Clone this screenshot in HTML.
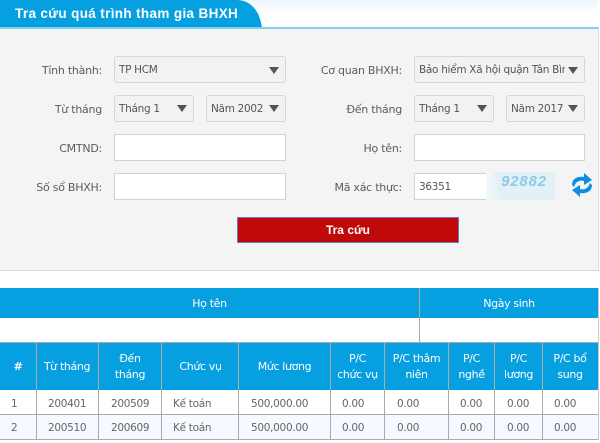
<!DOCTYPE html>
<html lang="vi"><head><meta charset="utf-8"><title>Tra cứu</title>
<style>
html,body{margin:0;padding:0;background:#fff}
#p{position:relative;width:600px;height:443px;overflow:hidden;background:#fff;font-family:"DejaVu Sans","Liberation Sans",sans-serif;color:#555}
#p div{position:absolute;box-sizing:border-box;white-space:nowrap}
.l{font-size:11px;text-align:right;width:110px;height:16px;line-height:18px;color:#5c5c5c;letter-spacing:-.25px}
.s{background:#f2f2f2;border:1.5px solid #d6d6d6;border-radius:3px;height:27px;font-size:10.5px;line-height:26px;padding-left:4px;color:#555;letter-spacing:-.3px;overflow:hidden}
.i{background:#fff;border:1px solid #d3d3d3;height:27px}
.a{width:0;height:0;border-left:5.5px solid transparent;border-right:5.5px solid transparent;border-top:7px solid #555}
.h{background:#069fe0;color:#fff;font-size:11px;line-height:16px;text-align:center;letter-spacing:-.35px;display:flex;align-items:center;justify-content:center;white-space:normal!important}
.c{font-size:10.5px;color:#666;line-height:26px;height:24px;letter-spacing:-.3px}
.v{width:1px;background:#aaa}
.o{height:1px;background:#aaa;left:0;width:598px}
</style></head><body><div id="p">
<div style="left:0;top:0;width:598px;height:28px;background:linear-gradient(#eaf6fc,#fff 12px)"></div>
<svg style="position:absolute;left:0;top:0" width="270" height="28"><path d="M0 0H238C252 1 260 12 262 28H0Z" fill="#069fe0"/></svg>
<div style="left:15px;top:5px;font-size:13.5px;line-height:18px;font-weight:bold;color:#fff;font-family:'Liberation Sans',sans-serif;letter-spacing:.35px">Tra cứu quá trình tham gia BHXH</div>
<div style="left:0;top:27px;width:599px;height:244px;background:#f4f4f4;border-top:2px solid #7fd2f0;border-bottom:1px solid #d8d8d8;border-right:1px solid #dcdcdc"></div>

<div class="l" style="left:-8px;top:62px">Tỉnh thành:</div>
<div class="s" style="left:114px;top:56px;width:172px">TP HCM</div><div class="a" style="left:269px;top:67px"></div>
<div class="l" style="left:-8px;top:101px">Từ tháng</div>
<div class="s" style="left:114px;top:95px;width:80px">Tháng 1</div><div class="a" style="left:177px;top:105px"></div>
<div class="s" style="left:206px;top:95px;width:80px">Năm 2002</div><div class="a" style="left:269px;top:105px"></div>
<div class="l" style="left:-8px;top:140px">CMTND:</div>
<div class="i" style="left:114px;top:134px;width:172px"></div>
<div class="l" style="left:-8px;top:179px">Số sổ BHXH:</div>
<div class="i" style="left:114px;top:173px;width:172px"></div>

<div class="l" style="left:292px;top:62px">Cơ quan BHXH:</div>
<div class="s" style="left:414px;top:56px;width:171px;padding-right:20px">Bảo hiểm Xã hội quận Tân Bình</div><div style="left:565px;top:58px;width:18px;height:23px;background:#f2f2f2"></div><div class="a" style="left:568px;top:67px"></div>
<div class="l" style="left:292px;top:101px">Đến tháng</div>
<div class="s" style="left:414px;top:95px;width:80px">Tháng 1</div><div class="a" style="left:477px;top:105px"></div>
<div class="s" style="left:506px;top:95px;width:79px">Năm 2017</div><div class="a" style="left:568px;top:105px"></div>
<div class="l" style="left:292px;top:140px">Họ tên:</div>
<div class="i" style="left:414px;top:134px;width:171px"></div>
<div class="l" style="left:292px;top:179px">Mã xác thực:</div>
<div class="i" style="left:414px;top:173px;width:141px;padding-left:4px;font-size:10.5px;letter-spacing:-.3px;line-height:27px;color:#555">36351</div>
<div style="left:486px;top:172px;width:69px;height:28px;background:linear-gradient(90deg,#f4f9fb,#e3f0f5 14px);color:#8ccbe4;font:italic bold 15px/20px 'Liberation Sans',sans-serif;text-align:center;letter-spacing:.8px;padding-left:7px">92882</div>
<svg style="position:absolute;left:572px;top:173px" width="20" height="24" viewBox="0 0 20 24"><path d="M0 12C0 6 5 3 12 4V0L20 7 12 12V8C8 7 4 8 2 14Z" fill="#0d8fe0"/><path d="M0 12C0 6 5 3 12 4V0L20 7 12 12V8C8 7 4 8 2 14Z" fill="#0d8fe0" transform="rotate(180 10 12)"/></svg>

<div style="left:237px;top:217px;width:222px;height:26px;background:#c00a0a;border:1px solid #5f7fc4;color:#fff;font:bold 12px/25px 'Liberation Sans',sans-serif;text-align:center">Tra cứu</div>

<div class="h" style="left:0;top:288px;width:419px;height:30px;padding-top:2px">Họ tên</div>
<div class="h" style="left:420px;top:288px;width:178px;height:30px;padding-top:2px">Ngày sinh</div>
<div class="v" style="left:419px;top:288px;height:55px"></div>
<div class="o" style="top:342px"></div>
<div style="left:598px;top:288px;width:1px;height:152px;background:#c8c8c8"></div>

<div class="h" style="left:0;top:343px;width:36px;height:47px;font-weight:bold">#</div>
<div class="h" style="left:36px;top:343px;width:62px;height:47px">Từ tháng</div>
<div class="h" style="left:98px;top:343px;width:64px;height:47px">Đến<br>tháng</div>
<div class="h" style="left:162px;top:343px;width:77px;height:47px">Chức vụ</div>
<div class="h" style="left:239px;top:343px;width:91px;height:47px">Mức lương</div>
<div class="h" style="left:330px;top:343px;width:55px;height:47px">P/C<br>chức vụ</div>
<div class="h" style="left:385px;top:343px;width:63px;height:47px">P/C thâm<br>niên</div>
<div class="h" style="left:448px;top:343px;width:47px;height:47px">P/C<br>nghề</div>
<div class="h" style="left:495px;top:343px;width:47px;height:47px">P/C<br>lương</div>
<div class="h" style="left:542px;top:343px;width:56px;height:47px">P/C bổ<br>sung</div>

<div style="left:0;top:415px;width:598px;height:24px;background:#f4faff"></div>
<div class="v" style="left:36px;top:343px;height:97px"></div>
<div class="v" style="left:98px;top:343px;height:97px"></div>
<div class="v" style="left:161px;top:343px;height:97px"></div>
<div class="v" style="left:238px;top:343px;height:97px"></div>
<div class="v" style="left:330px;top:343px;height:97px"></div>
<div class="v" style="left:384px;top:343px;height:97px"></div>
<div class="v" style="left:448px;top:343px;height:97px"></div>
<div class="v" style="left:494px;top:343px;height:97px"></div>
<div class="v" style="left:542px;top:343px;height:97px"></div>
<div class="o" style="top:414px"></div>
<div class="o" style="top:439px"></div>

<div class="c" style="left:11px;top:391px">1</div><div class="c" style="left:48px;top:391px">200401</div><div class="c" style="left:111px;top:391px">200509</div><div class="c" style="left:173px;top:391px">Kế toán</div><div class="c" style="left:251px;top:391px">500,000.00</div><div class="c" style="left:342px;top:391px">0.00</div><div class="c" style="left:397px;top:391px">0.00</div><div class="c" style="left:460px;top:391px">0.00</div><div class="c" style="left:507px;top:391px">0.00</div><div class="c" style="left:554px;top:391px">0.00</div>
<div class="c" style="left:11px;top:415px">2</div><div class="c" style="left:48px;top:415px">200510</div><div class="c" style="left:111px;top:415px">200609</div><div class="c" style="left:173px;top:415px">Kế toán</div><div class="c" style="left:251px;top:415px">500,000.00</div><div class="c" style="left:342px;top:415px">0.00</div><div class="c" style="left:397px;top:415px">0.00</div><div class="c" style="left:460px;top:415px">0.00</div><div class="c" style="left:507px;top:415px">0.00</div><div class="c" style="left:554px;top:415px">0.00</div>
</div></body></html>
